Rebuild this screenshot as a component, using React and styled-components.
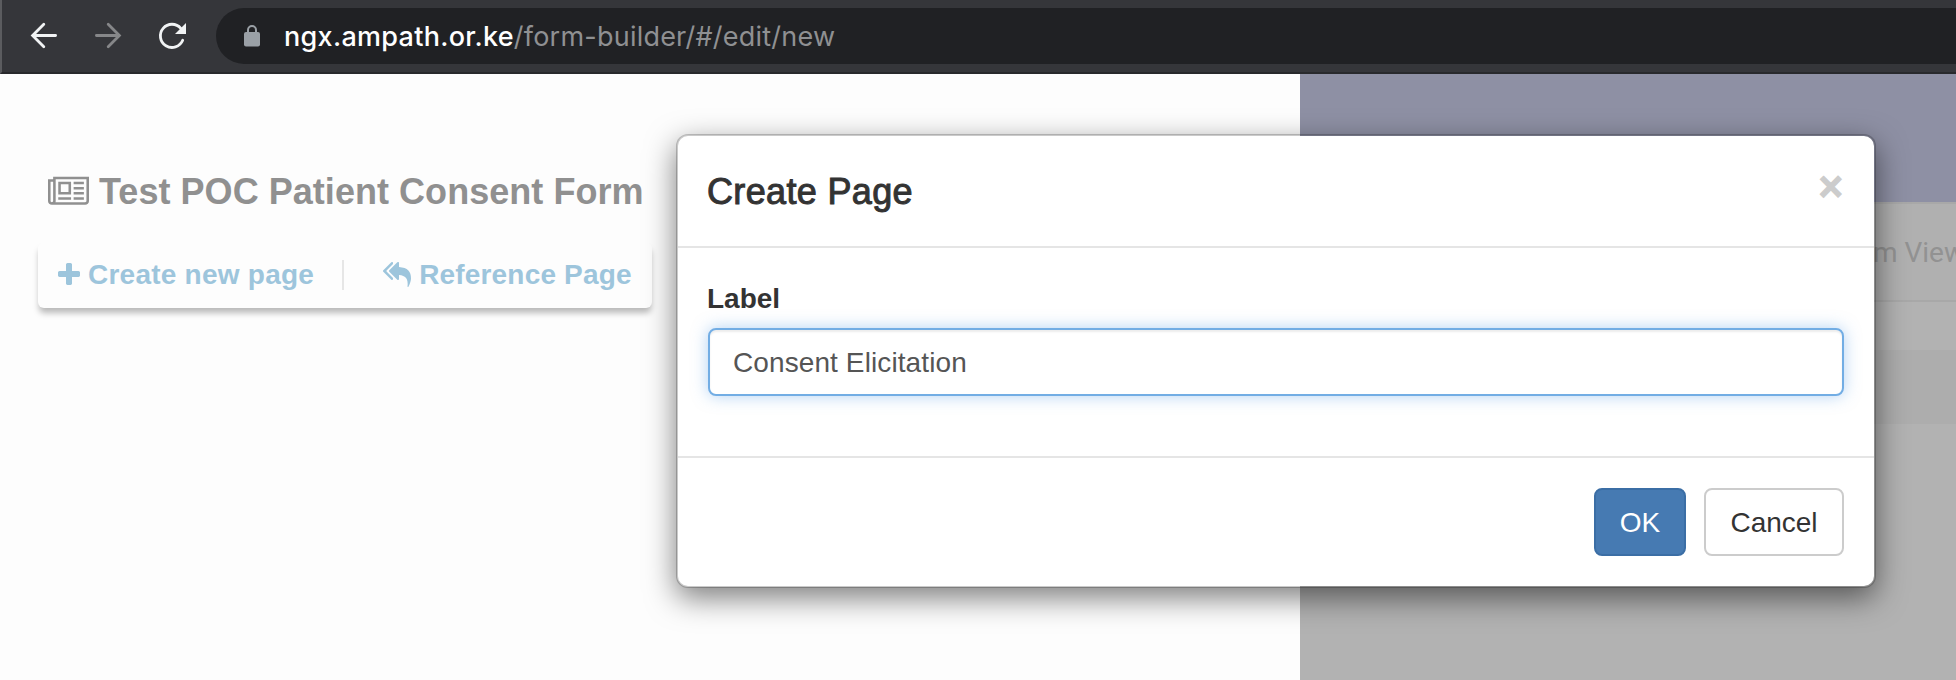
import React from "react";
import styled, { createGlobalStyle } from "styled-components";

const GlobalStyle = createGlobalStyle`
  *, *::before, *::after { box-sizing: border-box; }
  body { margin: 0; overflow: hidden; }
  button, input { font: inherit; margin: 0; }
`;

const Screen = styled.div`
  position: relative;
  display: flex;
  flex-direction: column;
  width: 1956px;
  height: 680px;
  overflow: hidden;
  background: #fdfdfd;
  color: #333;
  font-family: "Liberation Sans", Arial, sans-serif;
  font-size: 28px;
  line-height: 40px;
`;

const BrowserBar = styled.header`
  display: flex;
  align-items: center;
  flex: none;
  height: 74px;
  padding-left: 26px;
  background: #35363a;
  border-left: 2px solid #5b5c5f;
  border-bottom: 2px solid #28292c;
`;

const NavIcon = styled.svg`
  flex: none;
  width: 32px;
  height: 32px;
  margin-right: 32px;
  fill: none;
  stroke: ${(p) => (p.$dim ? "#868789" : "#f1f3f4")};
  stroke-width: 2.8;
  stroke-linecap: round;
`;

const AddressBar = styled.div`
  display: flex;
  align-items: center;
  flex: 1;
  height: 56px;
  margin-left: -4px;
  padding-left: 28px;
  background: #202124;
  border-radius: 28px 0 0 28px;
`;

const LockIcon = styled.svg`
  width: 16px;
  height: 22px;
  margin-right: 24px;
`;

const Url = styled.div`
  padding-top: 1px;
  font-family: Inter, sans-serif;
  font-size: 27px;
  letter-spacing: 0.22px;
  color: #8f9092;
  white-space: nowrap;
`;

const Host = styled.span`
  color: #fff;
  font-weight: 500;
  letter-spacing: 0.3px;
`;

const Workspace = styled.main`
  display: flex;
  flex: 1;
`;

const Editor = styled.section`
  width: 1300px;
  padding: 94px 0 0 38px;
`;

const FormTitle = styled.h1`
  display: flex;
  align-items: center;
  gap: 10px;
  height: 48px;
  margin: 0 0 26px;
  padding-left: 10px;
  color: #909090;
  font-size: 36px;
  font-weight: 700;
  letter-spacing: 0.04px;
`;

const Glyph = styled.svg`
  flex: none;
  width: ${(p) => p.$w}px;
  height: ${(p) => p.$h}px;
  fill: currentColor;
`;

const Toolbar = styled.div`
  display: flex;
  align-items: center;
  width: 614px;
  height: 66px;
  padding: 0 20px;
  background: #fdfdfd;
  border-radius: 6px;
  box-shadow: 0 6px 6px -1px rgba(0, 0, 0, 0.27);
`;

const ToolLink = styled.a`
  display: flex;
  align-items: center;
  gap: 8px;
  height: 30px;
  color: #9dc5dc;
  font-weight: 700;
  letter-spacing: ${(p) => p.$spacing}px;
  white-space: nowrap;
`;

const ToolDivider = styled.span`
  width: 2px;
  height: 30px;
  margin: 0 39px 0 28px;
  background: #e6e6e6;
`;

const Preview = styled.aside`
  display: flex;
  flex-direction: column;
  flex: 1;
  background: #b2b2b2;
`;

const PreviewHeader = styled.div`
  height: 128px;
  background: #8e90a4;
`;

const PreviewTabs = styled.div`
  display: flex;
  align-items: center;
  justify-content: flex-end;
  height: 100px;
  padding-top: 1px;
  background: #b0b0b0;
  border-top: 2px solid #a8a8a8;
  border-bottom: 2px solid #a8a8a8;
`;

const PreviewTab = styled.span`
  margin-right: -9px;
  color: #929292;
  font-family: Roboto, sans-serif;
  white-space: nowrap;
`;

const PreviewBand = styled.div`
  height: 74px;
  margin-top: 48px;
  background: #adadad;
`;

const Dialog = styled.div`
  position: absolute;
  top: 134px;
  left: 676px;
  display: flex;
  flex-direction: column;
  width: 1200px;
  height: 454px;
  background: #fff;
  background-clip: padding-box;
  border: 2px solid rgba(0, 0, 0, 0.2);
  border-radius: 12px;
  box-shadow: 0 10px 30px rgba(0, 0, 0, 0.5);
`;

const DialogHeader = styled.div`
  display: flex;
  justify-content: space-between;
  height: 112px;
  padding: 30px 31px 0 29px;
  border-bottom: 2px solid #e5e5e5;
`;

const DialogTitle = styled.h2`
  margin: 0;
  font-size: 36px;
  font-weight: 400;
  line-height: 52px;
  letter-spacing: 0.35px;
  -webkit-text-stroke: 1px #333;
`;

const CloseButton = styled.button`
  height: 42px;
  padding: 0;
  border: 0;
  background: none;
  color: #ccc;
  font-size: 42px;
  font-weight: 700;
  line-height: 42px;
  -webkit-text-stroke: 1px #ccc;
`;

const DialogBody = styled.div`
  display: flex;
  flex-direction: column;
  height: 208px;
  padding: 31px 30px 0;
`;

const FieldLabel = styled.label`
  margin: 0 0 9px -1px;
  font-weight: 700;
`;

const TextField = styled.input`
  width: 1136px;
  height: 68px;
  padding: 1px 23px 0;
  border: 2px solid #72ade4;
  border-radius: 8px;
  outline: 0;
  background: #fff;
  color: #555;
  letter-spacing: 0.1px;
  box-shadow: inset 0 2px 2px rgba(0, 0, 0, 0.075), 0 0 16px rgba(102, 165, 233, 0.5);
`;

const DialogFooter = styled.div`
  display: flex;
  justify-content: flex-end;
  gap: 18px;
  padding: 30px;
  border-top: 2px solid #e5e5e5;
`;

const DialogButton = styled.button`
  width: ${(p) => (p.$primary ? 92 : 140)}px;
  height: 68px;
  padding: 1px 0 0;
  border: 2px solid ${(p) => (p.$primary ? "#3b6ea5" : "#ccc")};
  border-radius: 8px;
  background: ${(p) => (p.$primary ? "#467ab2" : "#fff")};
  color: ${(p) => (p.$primary ? "#fff" : "#333")};
`;

export default function App() {
  return (
    <Screen>
      <GlobalStyle />
      <BrowserBar>
        <NavIcon viewBox="0 0 32 32">
          <path d="M27.600 15.500H5M15.800 4.300L4.600 15.500l11.200 11.200" />
        </NavIcon>
        <NavIcon viewBox="0 0 32 32" $dim>
          <path d="M4.400 15.500H27M16.200 4.300l11.200 11.200-11.200 11.200" />
        </NavIcon>
        <NavIcon viewBox="0 0 32 32">
          <path d="M26.700 20.300A11.600 11.600 0 1 1 24.800 8.300" />
          <path d="M30 3v11H19z" fill="#f1f3f4" stroke="none" />
        </NavIcon>
        <AddressBar>
          <LockIcon viewBox="0 0 16 22">
            <rect x="0" y="7" width="16" height="14.500" rx="2" fill="#9aa0a6" />
            <path d="M4 8V5a4 4 0 0 1 8 0v3" fill="none" stroke="#9aa0a6" strokeWidth="2" />
          </LockIcon>
          <Url>
            <Host>ngx.ampath.or.ke</Host>/form-builder/#/edit/new
          </Url>
        </AddressBar>
      </BrowserBar>

      <Workspace>
        <Editor>
          <FormTitle>
            <Glyph $w={41} $h={36} viewBox="0 0 2048 1792">
              <path d="M1024 512h-384v384h384v-384zM1152 1152v128h-640v-128h640zM1152 384v640h-640v-640h640zM1792 1152v128h-512v-128h512zM1792 896v128h-512v-128h512zM1792 640v128h-512v-128h512zM1792 384v128h-512v-128h512zM256 1344v-960h-128v960q0 26 19 45t45 19 45-19 19-45zM1920 1344v-1088h-1536v1088q0 33-11 64h1483q26 0 45-19t19-45zM2048 128v1216q0 80-56 136t-136 56h-1664q-80 0-136-56t-56-136v-1088h256v-128h1792z" />
            </Glyph>
            Test POC Patient Consent Form
          </FormTitle>
          <Toolbar>
            <ToolLink $spacing={0.24}>
              <Glyph $w={22} $h={28} viewBox="192 0 1408 1792">
                <path d="M1600 736v192q0 40-28 68t-68 28h-416v416q0 40-28 68t-68 28h-192q-40 0-68-28t-28-68v-416h-416q-40 0-68-28t-28-68v-192q0-40 28-68t68-28h416v-416q0-40 28-68t68-28h192q40 0 68 28t28 68v416h416q40 0 68 28t28 68z" />
              </Glyph>
              Create new page
            </ToolLink>
            <ToolDivider />
            <ToolLink $spacing={0.18}>
              <Glyph $w={28} $h={28} viewBox="0 0 1792 1792">
                <path d="M640 1082v70q0 42-39 59-13 5-25 5-27 0-45-19l-512-512q-19-19-19-45t19-45l512-512q29-31 70-14 39 17 39 59v69l-397 398q-19 19-19 45t19 45zM1792 1120q0 58-17 133.500t-38.500 138-48 125-40.500 90.500l-20 40q-8 17-28 17-6 0-9-1-25-8-23-34 43-400-106-565-64-71-170.500-110.500t-267.500-52.500v251q0 42-39 59-13 5-25 5-27 0-45-19l-512-512q-19-19-19-45t19-45l512-512q29-31 70-14 39 17 39 59v262q411 28 599 221 169 173 169 509z" />
              </Glyph>
              Reference Page
            </ToolLink>
          </Toolbar>
        </Editor>
        <Preview>
          <PreviewHeader />
          <PreviewTabs>
            <PreviewTab>Form View</PreviewTab>
          </PreviewTabs>
          <PreviewBand />
        </Preview>
      </Workspace>

      <Dialog role="dialog">
        <DialogHeader>
          <DialogTitle>Create Page</DialogTitle>
          <CloseButton>×</CloseButton>
        </DialogHeader>
        <DialogBody>
          <FieldLabel htmlFor="page-label">Label</FieldLabel>
          <TextField id="page-label" defaultValue="Consent Elicitation" />
        </DialogBody>
        <DialogFooter>
          <DialogButton $primary>OK</DialogButton>
          <DialogButton>Cancel</DialogButton>
        </DialogFooter>
      </Dialog>
    </Screen>
  );
}
